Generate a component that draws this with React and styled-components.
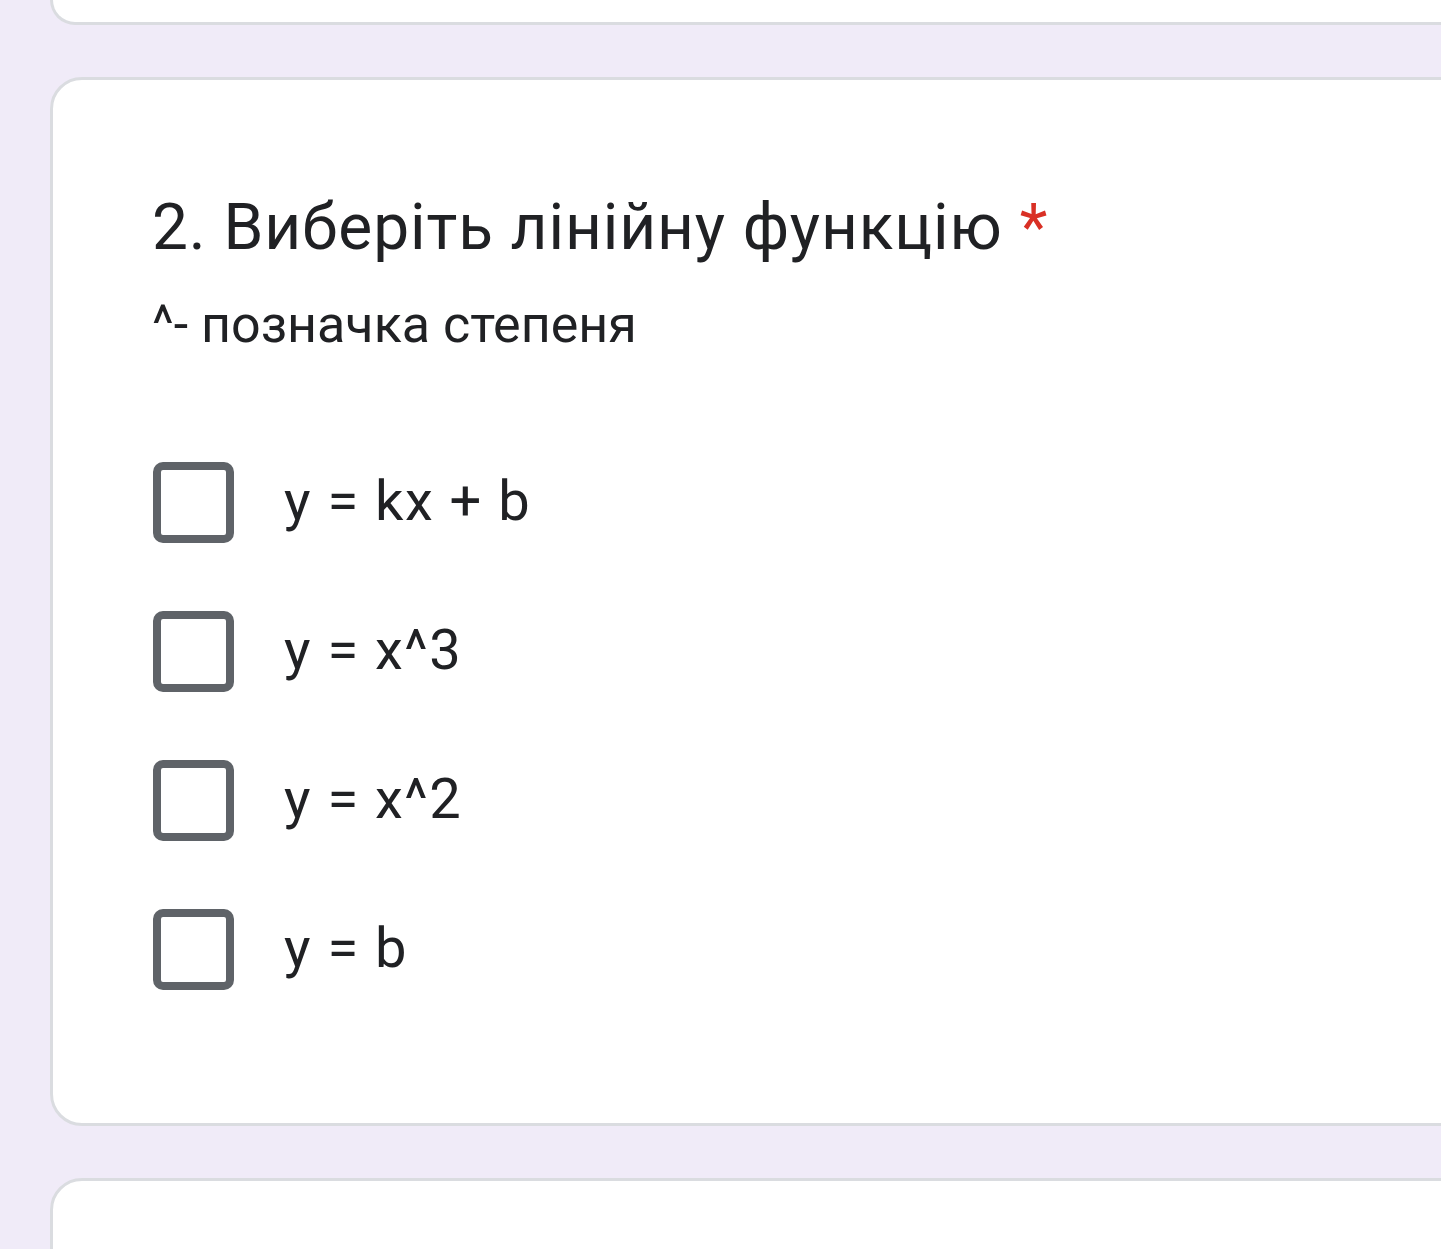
import React from "react"
import styled, { createGlobalStyle } from "styled-components"

const GlobalStyle = createGlobalStyle`
  html, body {
    margin: 0;
    padding: 0;
    background: #f0ebf8;
    overflow: hidden;
  }
`

const Page = styled.div`
  display: flex;
  flex-direction: column;
  gap: 52px;
  padding-left: 50px;
  min-height: 1249px;
  font-family: Roboto, "Liberation Sans", sans-serif;
  color: #202124;
`

const Card = styled.section`
  box-sizing: border-box;
  width: calc(100% + 120px);
  background: #ffffff;
  border: 3px solid #dadce0;
  border-radius: 32px;
`

const TopCard = styled(Card)`
  height: 25px;
  border-top: none;
  border-radius: 0 0 32px 32px;
`

const NextCard = styled(Card)`
  height: 200px;
`

const QuestionCard = styled(Card)`
  padding: 108px 0 133px 99px;
`

const Title = styled.h2`
  margin: 0;
  font-size: 64px;
  font-weight: 400;
  line-height: 80px;
  letter-spacing: 0.9px;
`

const Required = styled.span`
  color: #d93025;
  margin-left: 17px;
`

const Description = styled.p`
  margin: 25px 0 0;
  font-size: 52px;
  line-height: 64px;
`

const Options = styled.div`
  display: flex;
  flex-direction: column;
  gap: 68px;
  margin-top: 105px;
`

const Option = styled.label`
  display: flex;
  align-items: center;
  gap: 50px;
  font-size: 56px;
  line-height: 64px;
  letter-spacing: 1.5px;
  cursor: pointer;
`

const Box = styled.span`
  box-sizing: border-box;
  flex: none;
  width: 81px;
  height: 81px;
  border: 8px solid #5f6368;
  border-radius: 10px;
  margin-left: 1px;
`

const OptionText = styled.span`
  position: relative;
  top: -2px;
`

const options = ["y = kx + b", "y = x^3", "y = x^2", "y = b"]

const App = () => {
  return (
    <>
      <GlobalStyle />
      <Page>
        <TopCard />
        <QuestionCard>
          <Title>
            2. Виберіть лінійну функцію<Required>*</Required>
          </Title>
          <Description>^- позначка степеня</Description>
          <Options>
            {options.map((o) => (
              <Option key={o}>
                <Box />
                <OptionText>{o}</OptionText>
              </Option>
            ))}
          </Options>
        </QuestionCard>
        <NextCard />
      </Page>
    </>
  )
}

export default App
